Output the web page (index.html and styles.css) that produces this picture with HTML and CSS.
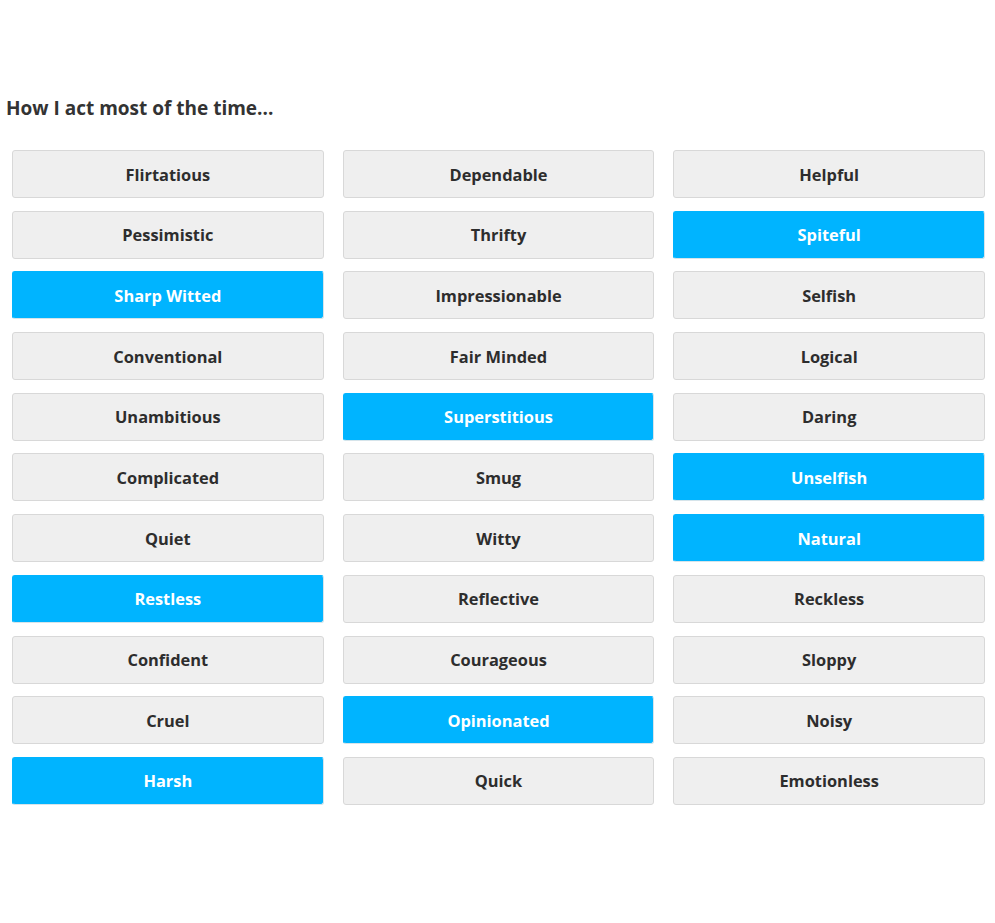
FILE: index.html
```html
<!DOCTYPE html>
<html lang="en">
<head>
    <meta charset="UTF-8">
    <meta name="viewport" content="width=device-width, initial-scale=1.0">
    <title>How I act</title>
    <link rel="stylesheet" href="styles.css">
</head>
<body>
    <div class="container">
        <h2 class="question">How I act most of the time...</h2>

        <div class="choices">
            <button class="choice">Flirtatious</button>
            <button class="choice">Dependable</button>
            <button class="choice">Helpful</button>

            <button class="choice">Pessimistic</button>
            <button class="choice">Thrifty</button>
            <button class="choice selected">Spiteful</button>

            <button class="choice selected">Sharp Witted</button>
            <button class="choice">Impressionable</button>
            <button class="choice">Selfish</button>

            <button class="choice">Conventional</button>
            <button class="choice">Fair Minded</button>
            <button class="choice">Logical</button>

            <button class="choice">Unambitious</button>
            <button class="choice selected">Superstitious</button>
            <button class="choice">Daring</button>

            <button class="choice">Complicated</button>
            <button class="choice">Smug</button>
            <button class="choice selected">Unselfish</button>

            <button class="choice">Quiet</button>
            <button class="choice">Witty</button>
            <button class="choice selected">Natural</button>

            <button class="choice selected">Restless</button>
            <button class="choice">Reflective</button>
            <button class="choice">Reckless</button>

            <button class="choice">Confident</button>
            <button class="choice">Courageous</button>
            <button class="choice">Sloppy</button>

            <button class="choice">Cruel</button>
            <button class="choice selected">Opinionated</button>
            <button class="choice">Noisy</button>

            <button class="choice selected">Harsh</button>
            <button class="choice">Quick</button>
            <button class="choice">Emotionless</button>
        </div>
    </div>
</body>
</html>
```

FILE: styles.css
```css
body {
    margin: 0;
    background-color: #fff;
    font-family: "Open Sans", Arial, sans-serif;
    color: #333;
}
.container {
    padding: 94px 10px 0 6px;
}
.question {
    margin: 0 0 28px 0;
    font-size: 19px;
    font-weight: 700;
    line-height: 28px;
    color: #333;
}
.choices {
    display: grid;
    grid-template-columns: repeat(3, 1fr);
    column-gap: 19px;
    row-gap: 12.7px;
    padding-left: 6px;
}
.choice {
    height: 48px;
    background-color: #efefef;
    border: 1px solid #d8d8d8;
    border-radius: 3px;
    font-family: "Open Sans", Arial, sans-serif;
    font-size: 16.4px;
    font-weight: 700;
    color: #2d2d2d;
    cursor: pointer;
}
.choice.selected {
    background-color: #00b4ff;
    border-color: #00b4ff #d6e4ea #d6e4ea #00b4ff;
    color: #fff;
}
```
